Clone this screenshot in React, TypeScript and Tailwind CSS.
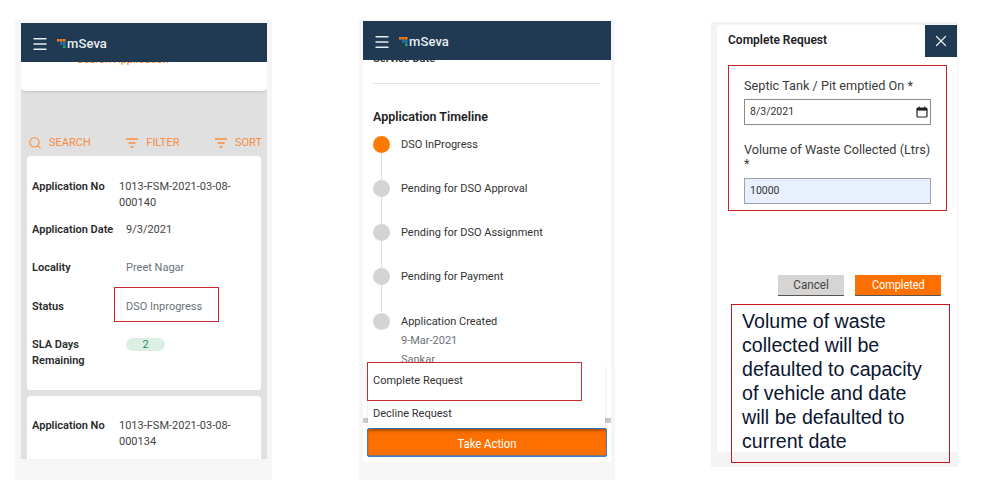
import React from 'react';
import { Search, Menu, X } from 'lucide-react';

function Logo() {
  return (
    <div className="flex items-center">
      <svg width="9" height="9" viewBox="0 0 9 9" className="mt-[-1px]">
        <rect x="0" y="0" width="2.6" height="2.6" fill="#f47d20" />
        <rect x="3" y="0" width="2.6" height="2.6" fill="#f47d20" />
        <rect x="6" y="0" width="2.6" height="2.6" fill="#f47d20" />
        <rect x="3" y="3.2" width="2.6" height="2.6" fill="#1f78b4" />
        <rect x="6" y="3.2" width="2.6" height="2.6" fill="#1f78b4" />
        <rect x="6" y="6.4" width="2.6" height="2.6" fill="#2f9e57" />
      </svg>
      <span className="ml-[1px] text-[13px] font-medium text-[#e8edf1] leading-none tracking-[0.1px]">mSeva</span>
    </div>
  );
}

function AppHeader() {
  return (
    <div className="relative z-10 h-[39px] bg-[#1f3a52] flex items-center pl-[10px] pt-[2px] gap-[8px]">
      <Menu className="w-[18px] h-[18px] text-[#e8edf1]" strokeWidth={1.8} />
      <Logo />
    </div>
  );
}

function FilterIcon() {
  return (
    <svg width="14" height="12" viewBox="0 0 14 12" fill="none" stroke="#f98a3c" strokeWidth="1.4">
      <path d="M1 2h12M3.5 6h7M5.5 10h3" />
    </svg>
  );
}

function DateIcon() {
  return (
    <svg width="12" height="12" viewBox="0 0 12 12" fill="none">
      <rect x="1" y="2" width="10" height="9" rx="1" stroke="#222" strokeWidth="1.2" />
      <rect x="1" y="2" width="10" height="2.6" fill="#222" />
      <path d="M3.2 0.6v2M8.8 0.6v2" stroke="#222" strokeWidth="1.1" />
    </svg>
  );
}

function InfoRow({ label, labelWidth, children, className }: { label: React.ReactNode; labelWidth: string; children: React.ReactNode; className: string }) {
  return (
    <div className={`flex text-[11px] leading-[16px] ${className}`}>
      <div className={`${labelWidth} shrink-0 font-semibold text-[#2a2a2a]`}>{label}</div>
      <div className="flex-1">{children}</div>
    </div>
  );
}

function AppNo({ no, className }: { no: string; className: string }) {
  return (
    <InfoRow label="Application No" labelWidth="w-[87px]" className={className}>
      <span className="text-[#444]">1013-FSM-2021-03-08-<br />{no}</span>
    </InfoRow>
  );
}

function ListPhone() {
  return (
    <div className="w-[257px] h-[460px] mt-[20px] ml-[15px] bg-[#f6f6f6] pl-[6px] pr-[5px] pt-[3px] relative">
      <div className="h-[436px] bg-[#e0e0e0] overflow-hidden">
        <AppHeader />
        <div className="h-[38px] bg-white rounded-b shadow-sm text-[11px] leading-[14px] text-[#f47d20] pl-[56px] mt-[-9px]">
          Search Application
        </div>
        <div className="flex items-center h-[18px] mt-[43px] pl-[7px] pr-[5px] text-[11px] text-[#f98a3c] justify-between">
          <div className="flex items-center gap-[7px]">
            <Search className="w-[14px] h-[14px]" strokeWidth={1.8} />
            <span>SEARCH</span>
          </div>
          <div className="flex items-center gap-[7px]">
            <FilterIcon />
            <span>FILTER</span>
          </div>
          <div className="flex items-center gap-[7px]">
            <FilterIcon />
            <span>SORT</span>
          </div>
        </div>
        <div className="mx-[6px] mt-[4px] h-[234px] bg-white rounded-[3px] px-[5px] pt-[23px]">
          <AppNo no="000140" className="" />
          <InfoRow label="Application Date" labelWidth="w-[94px]" className="mt-[11px]">
            <span className="text-[#444]">9/3/2021</span>
          </InfoRow>
          <InfoRow label="Locality" labelWidth="w-[94px]" className="mt-[22px]">
            <span className="text-[#6b7278]">Preet Nagar</span>
          </InfoRow>
          <InfoRow label="Status" labelWidth="w-[94px]" className="mt-[23px]">
            <span className="text-[#6b7278]">DSO Inprogress</span>
          </InfoRow>
          <InfoRow label={<>SLA Days<br />Remaining</>} labelWidth="w-[94px]" className="mt-[22px]">
            <div className="w-[39px] h-[13px] mt-[1px] rounded-full bg-[#dcefe5] text-[#2f8f5b] text-center leading-[13px]">2</div>
          </InfoRow>
        </div>
        <div className="mx-[6px] mt-[6px] h-[80px] bg-white rounded-[3px] px-[5px] pt-[22px]">
          <AppNo no="000134" className="" />
        </div>
      </div>
      <div className="absolute left-[99px] top-[267px] w-[105px] h-[35px] border-[1.5px] border-[#c8282e]" />
    </div>
  );
}

const steps = ['DSO InProgress', 'Pending for DSO Approval', 'Pending for DSO Assignment', 'Pending for Payment'];

function TimelineStep({ title, active, last }: { title: string; active?: boolean; last?: boolean }) {
  return (
    <div className="flex h-[44px] relative">
      <div className={`w-[17px] h-[17px] rounded-full shrink-0 ${active ? 'bg-[#fe7a05]' : 'bg-[#d5d4d2]'}`} />
      {!last && <div className="absolute left-[8px] top-[17px] w-px h-[27px] bg-[#dcdcdc]" />}
      <div className="ml-[11px] mt-[1px] text-[11px] leading-[16px] text-[#333]">{title}</div>
    </div>
  );
}

function TimelinePhone() {
  return (
    <div className="w-[256px] h-[460px] mt-[20px] ml-[87px] bg-[#f6f6f6] px-[4px] pt-[1px] relative">
      <div className="h-[441px] bg-white flex flex-col">
        <AppHeader />
        <div className="flex-1 px-[10px] overflow-hidden">
          <div className="text-[11px] leading-[14px] font-semibold text-[#333] mt-[-8px]">Service Date</div>
          <div className="h-px bg-[#e4e4e4] mt-[17px] mr-[1px]" />
          <div className="text-[12.5px] font-semibold text-[#222] leading-[18px] mt-[24px]">Application Timeline</div>
          <div className="mt-[10px]">
            {steps.map((s, i) => (
              <TimelineStep key={s} title={s} active={i === 0} />
            ))}
            <div className="pt-[1px]">
              <TimelineStep title="Application Created" last />
            </div>
            <div className="ml-[28px] mt-[-26px] text-[11px] leading-[19px] text-[#6b7278]">
              <div>9-Mar-2021</div>
              <div>Sankar</div>
            </div>
          </div>
        </div>
        <div className="h-[5px] bg-[#cccccc] mb-[5px]" />
        <div className="mx-[4px] mb-[5px] h-[29px] pt-[2px] bg-[#fe7000] border border-[#3b82d6] rounded-[2px] shadow-[inset_0_2px_2px_#c85a00,inset_0_-1px_0_#777] text-white text-[13px] flex items-center justify-center">
          <span className="inline-block scale-x-[0.87]">Take Action</span>
        </div>
      </div>
      <div className="absolute z-10 left-[9px] top-[342px] w-[237px] h-[66px] bg-white shadow-md text-[11px] text-[#333] pl-[5px]">
        <div className="pt-[12px] leading-[14px]">Complete Request</div>
        <div className="pt-[19px] leading-[14px]">Decline Request</div>
      </div>
      <div className="absolute z-10 left-[8px] top-[342px] w-[215px] h-[39px] border-[1.5px] border-[#cf2a30]" />
    </div>
  );
}

function FormPhone() {
  return (
    <div className="w-[247px] h-[445px] mt-[22px] ml-[96px] bg-[#f4f4f4] pl-[6px] pr-[1px] pt-[3px] relative">
      <div className="h-[427px] bg-white relative">
        <div className="flex items-start justify-between">
          <div className="text-[12px] font-semibold text-[#222] leading-[16px] pl-[11px] pt-[7px]">Complete Request</div>
          <div className="w-[32px] h-[32px] bg-[#1f3a52] flex items-center justify-center">
            <X className="w-[18px] h-[18px] text-[#e8edf1]" strokeWidth={1.6} />
          </div>
        </div>
        <div className="ml-[11px] mt-[8px] w-[219px] h-[146px] border border-[#cc2229] px-[15px] pt-[12px]">
          <div className="text-[12.7px] leading-[16px] text-[#3a3a3a]">Septic Tank / Pit emptied On *</div>
          <div className="mt-[5px] h-[26px] border border-[#8a8a8a] flex items-center justify-between pl-[5px] pr-[2px] text-[10.5px] text-[#333]">
            <span>8/3/2021</span>
            <DateIcon />
          </div>
          <div className="mt-[18px] text-[12.7px] leading-[14px] text-[#3a3a3a] whitespace-nowrap">Volume of Waste Collected (Ltrs)<br />*</div>
          <div className="mt-[7px] h-[26px] border border-[#9aa3ad] bg-[#e8f0fe] flex items-center pl-[5px] text-[10.5px] text-[#333]">10000</div>
        </div>
        <div className="flex justify-end gap-[11px] mt-[64px] pr-[16px]">
          <div className="w-[66px] h-[21px] bg-[#d6d5d4] border-b border-[#555] text-[12.5px] text-[#444] flex items-center justify-center">
            <span className="inline-block scale-x-[0.93]">Cancel</span>
          </div>
          <div className="w-[86px] h-[21px] bg-[#fe7000] border-b border-[#555] text-[12.5px] text-white flex items-center justify-center">
            <span className="inline-block scale-x-[0.87]">Completed</span>
          </div>
        </div>
      </div>
      <div className="absolute left-[20px] top-[282px] w-[219px] h-[159px] border border-[#c4161c] pl-[10px] pt-[4px] font-['Liberation_Sans',sans-serif] text-[19.6px] leading-[24px] text-[#0b1530] whitespace-nowrap">
        Volume of waste<br />collected will be<br />defaulted to capacity<br />of vehicle and date<br />will be defaulted to<br />current date
      </div>
    </div>
  );
}

export default function App() {
  return (
    <div className="w-[987px] h-[492px] bg-white flex items-start overflow-hidden font-['Roboto',sans-serif]">
      <ListPhone />
      <TimelinePhone />
      <FormPhone />
    </div>
  );
}
